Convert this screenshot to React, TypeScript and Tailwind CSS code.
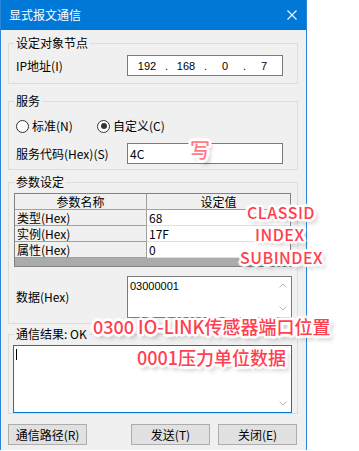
import React from "react";

const annot =
  "absolute whitespace-nowrap leading-none font-['Noto_Sans_CJK_SC',sans-serif] font-medium text-[#ff3f50] [text-shadow:1px_0_0_#fff,-1px_0_0_#fff,0_1px_0_#fff,0_-1px_0_#fff,2px_0_0_#fff,-2px_0_0_#fff,0_2px_0_#fff,0_-2px_0_#fff,2px_2px_0_#fff,-2px_-2px_0_#fff,2px_-2px_0_#fff,-2px_2px_0_#fff,3px_0_1px_#fff,-3px_0_1px_#fff,0_3px_1px_#fff,0_-3px_1px_#fff,3px_4px_4px_rgba(0,0,0,0.35)]";

function Chevron({ up }: { up?: boolean }) {
  return (
    <svg width="8" height="5" viewBox="0 0 8 5">
      <path
        d={up ? "M0.5 4.5L4 1L7.5 4.5" : "M0.5 0.5L4 4L7.5 0.5"}
        stroke="#b8b8b8"
        strokeWidth="1"
        fill="none"
      />
    </svg>
  );
}

function Radio({ checked }: { checked?: boolean }) {
  return (
    <span className="w-[13px] h-[13px] rounded-full border border-[#333333] bg-white flex items-center justify-center shrink-0">
      {checked && <span className="w-[6px] h-[6px] rounded-full bg-[#333333]" />}
    </span>
  );
}

export default function App() {
  return (
    <div className="relative w-[359px] h-[451px] bg-white overflow-hidden font-['Noto_Sans_CJK_SC',sans-serif] text-[12px] text-black leading-[14px]">
      <div className="w-[307px] h-[450px] border-x border-[#2a86d8] bg-[#f0f0f0] flex flex-col">
        {/* title bar */}
        <div className="h-[30px] bg-[#0078d7] flex items-center justify-between pl-[8px] pr-[9px] text-white shrink-0">
          <span className="text-[12px] leading-none">显式报文通信</span>
          <svg width="10" height="10" viewBox="0 0 10 10">
            <path d="M0.5 0.5L9.5 9.5M9.5 0.5L0.5 9.5" stroke="white" strokeWidth="1.1" />
          </svg>
        </div>

        <div className="pl-[7px] pr-[8px] flex flex-col">
          {/* group 1 */}
          <fieldset className="mt-[6px] border border-[#dcdcdc] pb-[7px]">
            <legend className="ml-[5px] px-[2px] leading-[14px]">设定对象节点</legend>
            <div className="mt-[5px] flex items-center">
              <span className="w-[118px] pl-[7px]">IP地址(I)</span>
              <div className="w-[156px] h-[21px] border border-[#7a7a7a] bg-white flex items-center pl-[1px] font-['Liberation_Sans',sans-serif] text-[11px]">
                <span className="w-[36px] text-center">192</span>
                <span className="w-[3px] text-center">.</span>
                <span className="w-[36px] text-center">168</span>
                <span className="w-[3px] text-center">.</span>
                <span className="w-[36px] text-center">0</span>
                <span className="w-[3px] text-center">.</span>
                <span className="w-[36px] text-center">7</span>
              </div>
            </div>
          </fieldset>

          {/* group 2 */}
          <fieldset className="mt-[10px] border border-[#dcdcdc] pb-[5px]">
            <legend className="ml-[5px] px-[2px] leading-[14px]">服务</legend>
            <div className="mt-[10px] h-[16px] flex items-center pl-[7px]">
              <div className="w-[81px] flex items-center gap-[3px]">
                <Radio />
                <span>标准(N)</span>
              </div>
              <div className="flex items-center gap-[3px]">
                <Radio checked />
                <span>自定义(C)</span>
              </div>
            </div>
            <div className="mt-[9px] flex items-center">
              <span className="w-[118px] pl-[7px]">服务代码(Hex)(S)</span>
              <div className="w-[156px] h-[21px] border border-[#7a7a7a] bg-white flex items-center pl-[2px]">
                4C
              </div>
            </div>
          </fieldset>

          {/* group 3 */}
          <fieldset className="mt-[5px] border border-[#dcdcdc] pb-[5px]">
            <legend className="ml-[5px] px-[2px] leading-[14px]">参数设定</legend>
            <div className="mt-[4px] ml-[5px] w-[277px] border border-[#828282] bg-[#ababab] flex flex-col">
              <div className="flex h-[16px] border-b border-[#a0a0a0] bg-[#f0f0f0]">
                <div className="w-[132px] border-r border-[#a0a0a0] text-center leading-[15px]">参数名称</div>
                <div className="flex-1 text-center leading-[15px]">设定值</div>
              </div>
              {[
                ["类型(Hex)", "68"],
                ["实例(Hex)", "17F"],
                ["属性(Hex)", "0"],
              ].map(([k, v]) => (
                <div key={k} className="flex h-[16px]">
                  <div className="w-[132px] border-r border-b border-[#a0a0a0] bg-[#f0f0f0] pl-[2px] leading-[15px]">{k}</div>
                  <div className="flex-1 border-b border-[#e0e0e0] bg-white pl-[2px] leading-[15px]">{v}</div>
                </div>
              ))}
              <div className="h-[8px]" />
            </div>
            <div className="mt-[9px] flex items-center">
              <span className="w-[118px] pl-[7px]">数据(Hex)</span>
              <div className="w-[165px] h-[42px] border border-[#7a7a7a] bg-white flex">
                <div className="flex-1 pl-[2px] pt-[3px] font-['Liberation_Sans',sans-serif] text-[11px] leading-[13px]">03000001</div>
                <div className="w-[17px] flex flex-col justify-between">
                  <div className="h-[17px] flex items-center justify-center"><Chevron up /></div>
                  <div className="h-[17px] flex items-center justify-center"><Chevron /></div>
                </div>
              </div>
            </div>
          </fieldset>

          {/* group 4 */}
          <fieldset className="mt-[3px] border border-[#dcdcdc]">
            <legend className="ml-[5px] px-[2px] leading-[14px]">通信结果: OK</legend>
            <div className="mt-[4px] ml-[4px] w-[279px] h-[68px] border border-[#0078d7] bg-white flex">
              <div className="flex-1 pl-[2px] pt-[3px]">
                <div className="w-[1px] h-[11px] bg-black" />
              </div>
              <div className="w-[17px] flex flex-col justify-between">
                <div className="h-[17px] flex items-center justify-center"><Chevron up /></div>
                <div className="h-[17px] flex items-center justify-center"><Chevron /></div>
              </div>
            </div>
          </fieldset>

          {/* buttons */}
          <div className="mt-[10px] flex items-center justify-between">
            <button className="w-[79px] h-[21px] bg-[#e1e1e1] border border-[#adadad] leading-none">通信路径(R)</button>
            <div className="flex gap-[8px] mr-[1px]">
              <button className="w-[79px] h-[21px] bg-[#e1e1e1] border border-[#adadad] leading-none">发送(T)</button>
              <button className="w-[79px] h-[21px] bg-[#e1e1e1] border border-[#adadad] leading-none">关闭(E)</button>
            </div>
          </div>
        </div>
      </div>

      {/* annotations */}
      <span className={`${annot} left-[190px] top-[140px] text-[20px] text-[#ff7b86]`}>写</span>
      <span className={`${annot} left-[247px] top-[204px] text-[16px] tracking-[0.5px]`}>CLASSID</span>
      <span className={`${annot} left-[255px] top-[226px] text-[16px] tracking-[0.5px]`}>INDEX</span>
      <span className={`${annot} left-[240px] top-[249px] text-[16px] tracking-[0.5px]`}>SUBINDEX</span>
      <span className={`${annot} left-[93px] top-[317px] text-[18px]`}>0300 IO-LINK传感器端口位置</span>
      <span className={`${annot} left-[137px] top-[348px] text-[18px]`}>0001压力单位数据</span>
    </div>
  );
}
